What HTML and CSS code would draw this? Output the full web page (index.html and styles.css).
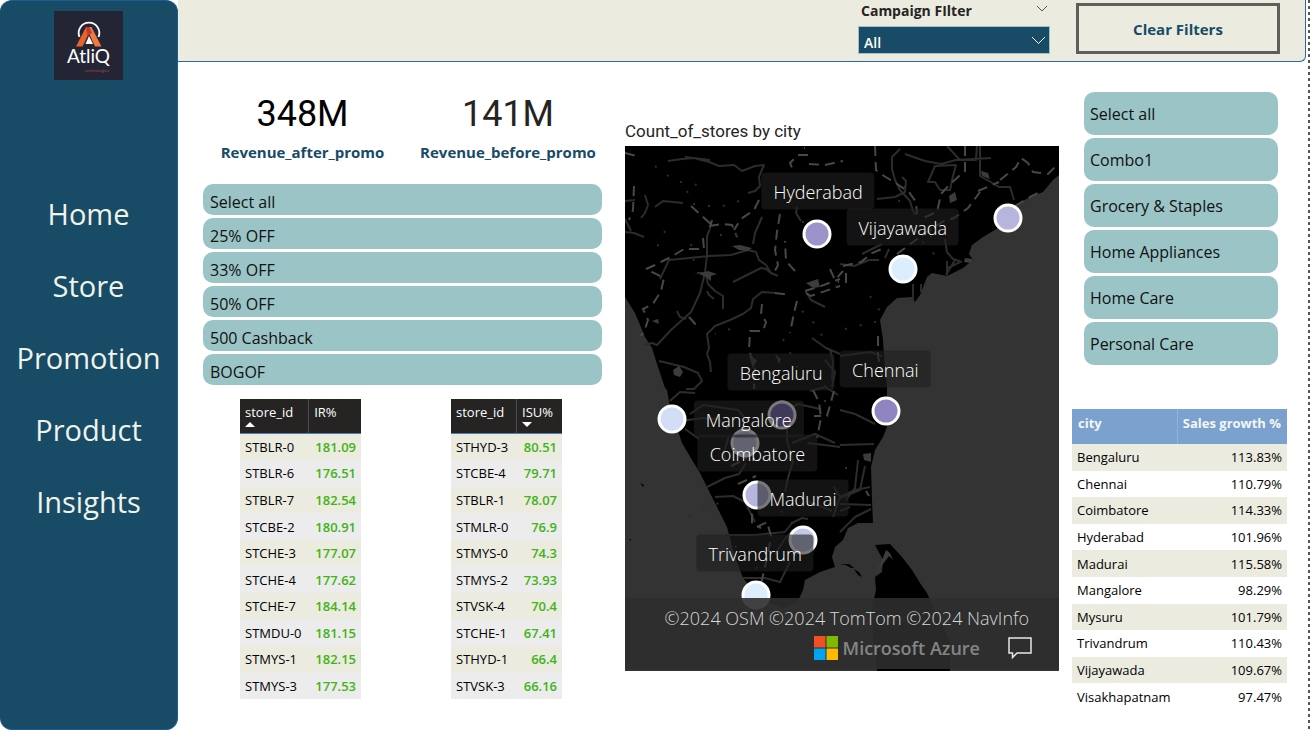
FILE: index.html
```html
<!DOCTYPE html>
<html lang="en">
<head>
<meta charset="utf-8">
<title>Promotion dashboard</title>
<link rel="stylesheet" href="styles.css">
</head>
<body>
<div class="page">
  <aside class="sidebar">
    <svg class="logo" viewBox="0 0 69 69" role="img" aria-label="AtliQ technologies">
      <rect width="69" height="69" fill="#232534"/>
      <path d="M25.500 26A10.300 10.300 0 1 1 44.500 26" fill="none" stroke="#fff" stroke-width="1.800"/>
      <path d="M22 35.500L32 16h6L28.500 35.500z" fill="#e8622c"/>
      <path d="M32 16h5.500L47.500 35.500h-6.500z" fill="#f07a3c"/>
      <path d="M32 16h3.500l2.500 6-4.500 3z" fill="#c33a35"/>
      <path d="M35 25l4 8h-7.500z" fill="#fff"/>
      <text class="logo-name" x="34.500" y="52" text-anchor="middle">AtliQ</text>
      <text class="logo-sub" x="43" y="61" text-anchor="middle">technologies</text>
    </svg>
    <nav class="nav">
      <a href="#home">Home</a>
      <a href="#store">Store</a>
      <a href="#promotion">Promotion</a>
      <a href="#product">Product</a>
      <a href="#insights">Insights</a>
    </nav>
  </aside>

  <main class="main">
    <header class="topbar">
      <div class="filter">
        <div class="filter-head">
          <label for="campaign">Campaign FIlter</label>
          <svg class="chevron" viewBox="0 0 12 7" aria-hidden="true"><path d="M1 1l5 5 5-5" fill="none" stroke="#555" stroke-width="1"/></svg>
        </div>
        <div class="select-wrap">
          <select id="campaign"><option>All</option></select>
          <svg class="select-arrow" viewBox="0 0 15 9" aria-hidden="true"><path d="M1 1l6.500 6.500L14 1" fill="none" stroke="#fff" stroke-width="1"/></svg>
        </div>
      </div>
      <button class="clear" type="button">Clear Filters</button>
    </header>

    <div class="content">
      <section class="left">
        <div class="kpis">
          <div class="kpi kpi-strong"><strong>348M</strong><span>Revenue_after_promo</span></div>
          <div class="kpi"><strong>141M</strong><span>Revenue_before_promo</span></div>
        </div>
        <div class="chips chips-low">
          <button type="button">Select all</button>
          <button type="button">25% OFF</button>
          <button type="button">33% OFF</button>
          <button type="button">50% OFF</button>
          <button type="button">500 Cashback</button>
          <button type="button">BOGOF</button>
        </div>
        <div class="tables">
          <table class="stores stores-ir">
            <thead><tr><th>store_id<i class="sort sort-up"></i></th><th>IR%</th></tr></thead>
            <tbody>
              <tr><td>STBLR-0</td><td>181.09</td></tr>
              <tr><td>STBLR-6</td><td>176.51</td></tr>
              <tr><td>STBLR-7</td><td>182.54</td></tr>
              <tr><td>STCBE-2</td><td>180.91</td></tr>
              <tr><td>STCHE-3</td><td>177.07</td></tr>
              <tr><td>STCHE-4</td><td>177.62</td></tr>
              <tr><td>STCHE-7</td><td>184.14</td></tr>
              <tr><td>STMDU-0</td><td>181.15</td></tr>
              <tr><td>STMYS-1</td><td>182.15</td></tr>
              <tr><td>STMYS-3</td><td>177.53</td></tr>
            </tbody>
          </table>
          <table class="stores stores-isu">
            <thead><tr><th>store_id</th><th>ISU%<i class="sort sort-down"></i></th></tr></thead>
            <tbody>
              <tr><td>STHYD-3</td><td>80.51</td></tr>
              <tr><td>STCBE-4</td><td>79.71</td></tr>
              <tr><td>STBLR-1</td><td>78.07</td></tr>
              <tr><td>STMLR-0</td><td>76.9</td></tr>
              <tr><td>STMYS-0</td><td>74.3</td></tr>
              <tr><td>STMYS-2</td><td>73.93</td></tr>
              <tr><td>STVSK-4</td><td>70.4</td></tr>
              <tr><td>STCHE-1</td><td>67.41</td></tr>
              <tr><td>STHYD-1</td><td>66.4</td></tr>
              <tr><td>STVSK-3</td><td>66.16</td></tr>
            </tbody>
          </table>
        </div>
      </section>

      <section class="map-panel">
        <h2>Count_of_stores by city</h2>
        <div class="map">
          <svg class="map-art" viewBox="0 0 434 525" aria-hidden="true">
            <path class="land" d="M0 0H434V29L428 34 418 46 405 51 388 61 375 81 358 91 347 99 344 108 348 114 338 122 322 130 307 127 302 131 295 149 290 156 287 151 272 152 262 161 255 174 258 194 260 224 262 242 262 281 258 291 250 304 246 321 247 354 248 377H233L223 382 218 394 210 401 207 411 210 421 195 426 180 434 178 444 172 457 158 462 142 456 128 444 118 432 110 411 102 381 85 347 75 327 67 314 57 297 45 261 42 244 40 242 33 221 27 202 20 191 10 167 0 151Z"/>
            <path class="land" d="M250 399L265 398 277 411 287 424 295 437 302 447 308 461 318 481 325 497 325 525H252L248 491 247 461 251 444 250 431 257 426 258 414Z"/>
            <path class="land" d="M15 337l4 2-1 2zM4 393h2v2zM215 418l9 0 5 4-3 0-5-3zM229 423l5 3 3 5-4-2z"/>
            <g class="roads">
              <path d="M43 15l14-2 12-1 15 4 10 4 15-1 8 6 13-5 9-1-5 12 1 9-5 5-7 2M60 11l25 3M0 55l10-1M20 49l3 10-3 8-4 5M30 61l8-6 20 2M0 86l9 1 10 4M0 73l6 12"/>
              <path d="M19 199l8-2 5 2 14-15 20-18 9-19 5-20 2-18 0-19 3-7M35 133l9-19 40-4 22-1 17-5 8 2 3 8 7 5 5 8 7 3M128 98l2-11 7-16M82 127l-10 0M81 128l2 10 7 7 8 5 0 13M82 145l2 4 5 4M108 136l20-10 8-4 5 1 6 5M52 165l3 6 6 2"/>
              <path d="M151 147l-14-1-9 7-2 9-8 6-13 6-15 6-8 8 2 14-2 6 3 8 1 10M34 215l25 6 14 6 4 8-8 8-8 0M187 192l14 10 14 6M205 203l3 12-1 20M181 146l5 8 14 7M172 61l-1 6 5 8"/>
              <path d="M275 3l-8 8 0 12 3 11 5 10 10 11 3 10 3 4M252 53l18-2 10-5 1-11-4-4M322 0l13 14 16 0 1-15M310 20l21-1-3 11-3 14-10 0-5-8-7 0zM355 0v30l9 5 10 6 11 0 4 13M280 8l20 7 16 3 15-4 35-2"/>
              <path d="M320 93l2 13 6 7 9 3M322 115v14M330 114l-9 15M335 116l-12 6M260 112l4-9M215 118l14 2 15-6 10 0M288 138v16M296 146v-8M237 108l20-10"/>
              <path d="M45 255l10-9 15 1M57 275l20-3 17 1 9 10M65 268l13-9 35 5 10 12M60 283l14 10M82 341l18-9 14-4 7-11M90 351l18-1 12 6 10 20M100 389l30 0 30-3 7-9 10-5 6 1M150 408l10-15 8-9M118 432l22 0 15 4 10-20M163 263l10-5 22 5M162 275l0 20 6 20-5 17-3 14M167 297l23-9 20 9M104 290l-5 16 2 10"/>
              <path d="M215 299l34-1M215 351l15-7 15-3M215 358l31 1M215 386l15-15 16-8M233 314l-3 28-9 12M240 320l-5 24-20 8M215 365l10-4M215 264l15 4 20 10M183 297l32 4M185 245l15-4 13 8M200 214l10 12-3 15M215 210l30-4 12 4M208 371l7-20-6-10M182 355l25 10"/>
            </g>
            <g class="borders">
              <path d="M179 2h1M183 9h-10l-8 8 3 7M184 18l16 1 18-4M0 7l15 4M9 40l-1 24-4 10M134 54l-5 10-13 9-7 11M78 92l1 11-20 0-13 8-16 8-9 4 18 9-3 13-8 13-10 5 5 11-3 9-4 7M155 68l-3 18-2 18 3 15-5 10M170 125l-9-10-1-20"/>
              <path d="M150 147l15 2M180 145l16-5 19-7M181 147l5 3 20-7 9-3M137 158l-1 10 5 8-3 9-13 0-1 20 6 14-1 24M172 155l-3 12-4 20M84 80l13-2 10 1 5 12M85 82l2-8M66 60l22 20M64 171l8 9"/>
              <path d="M250 0l1 24 8 6 10 6 15 10 7 10 1 12M340 0v25l-15 13-9 10-4 18-14 6M375 34l16-13 5-9 7 5 5 9 15 2 10-10M272 108l16-12 11-8 18-12 12-4 14-10 12-16M353 45l21-9M390 60l15-9 8-4M218 120l18-4 11-9 10-4M205 123l5 11 8-9M221 127v9h-8"/>
              <path d="M188 244l6 12 2 16-4 20M209 245l-7 25-13 0M106 320l15-7 0-20M113 338l18-8M136 354l-9 14 0 10 9 4M132 381l10-5 4 14-3 18-7 30M253 190v20l4 20M244 350l-3-5"/>
            </g>
            <g class="towns">
              <path d="M74 128l9-3 9 3-6 2 0 5-5-4zM48 224l6-4 4 6-3 5-6-2zM181 137l12-4 2 8-7 1zM340 112l8 1-2 4-7-1zM356 25l7 2 2 6-8-3zM324 50l6-4 2 8-7 3zM238 308l8-1 0 9-7-2zM252 426l9-22 4 3 3 7-4-4zM27 175l6-2 1 5zM107 100l8-1 12 3-4 3-9-1zM124 210l8 4-4 8zM150 208l6 5-2 5z"/>
              <path class="dots" d="M30 20l20 15 28 5M62 45l5 13 28 3 19-6M66 98l5 30M95 89l20 0M178 75l0 28M185 90l10 10M177 165l15 15 10 20M158 193l18 35M105 183l-15 5M220 183l38-9M245 150l10 15M287 85l24 25M305 90l12 9M200 239l0 20M180 395l-20 30M110 400l25 25M235 90l30 2M280 40l-10 25M220 322l15 0M156 365l14 15M64 370l30-13M140 345l9 15M40 85l-10 20"/>
            </g>
            <g class="pins">
              <circle cx="192" cy="88" r="13" fill="#9b93ca"/>
              <circle cx="278" cy="123" r="13" fill="#dceefe"/>
              <circle cx="383" cy="72" r="13" fill="#b6b5dd"/>
              <circle cx="261" cy="265" r="13" fill="#9084c1"/>
              <circle cx="47" cy="273" r="13" fill="#d2def5"/>
              <circle cx="157" cy="269" r="13" fill="#745fae"/>
              <circle cx="120" cy="297" r="13" fill="#c4c8e8"/>
              <circle cx="132" cy="349" r="13" fill="#b6b6df"/>
              <circle cx="178" cy="394" r="13" fill="#c4c9e9"/>
              <circle cx="131" cy="449" r="13" fill="#dceefe"/>
            </g>
          </svg>
          <span class="place hyderabad">Hyderabad</span>
          <span class="place vijayawada">Vijayawada</span>
          <span class="place chennai">Chennai</span>
          <span class="place bengaluru">Bengaluru</span>
          <span class="place mangalore">Mangalore</span>
          <span class="place coimbatore">Coimbatore</span>
          <span class="place madurai">Madurai</span>
          <span class="place trivandrum">Trivandrum</span>
          <div class="credits">
            <div class="credits-text">©2024 OSM ©2024 TomTom ©2024 NavInfo</div>
            <div class="credits-brand">
              <svg class="ms" viewBox="0 0 24 24" aria-hidden="true"><path fill="#f25022" d="M0 0h11.500v11.500H0z"/><path fill="#7fba00" d="M12.500 0H24v11.500H12.500z"/><path fill="#00a4ef" d="M0 12.500h11.500V24H0z"/><path fill="#ffb900" d="M12.500 12.500H24V24H12.500z"/></svg>
              <span>Microsoft Azure</span>
              <button class="feedback" type="button" aria-label="Feedback"><svg viewBox="0 0 24 22" aria-hidden="true"><path d="M1 1h22v15H9l-4.500 4.500V16H1z" fill="none" stroke="#e6e6e6" stroke-width="1.500"/></svg></button>
            </div>
          </div>
        </div>
      </section>

      <section class="right">
        <div class="chips chips-tall">
          <button type="button">Select all</button>
          <button type="button">Combo1</button>
          <button type="button">Grocery &amp; Staples</button>
          <button type="button">Home Appliances</button>
          <button type="button">Home Care</button>
          <button type="button">Personal Care</button>
        </div>
        <table class="growth">
          <thead><tr><th>city</th><th>Sales growth %</th></tr></thead>
          <tbody>
            <tr><td>Bengaluru</td><td>113.83%</td></tr>
            <tr><td>Chennai</td><td>110.79%</td></tr>
            <tr><td>Coimbatore</td><td>114.33%</td></tr>
            <tr><td>Hyderabad</td><td>101.96%</td></tr>
            <tr><td>Madurai</td><td>115.58%</td></tr>
            <tr><td>Mangalore</td><td>98.29%</td></tr>
            <tr><td>Mysuru</td><td>101.79%</td></tr>
            <tr><td>Trivandrum</td><td>110.43%</td></tr>
            <tr><td>Vijayawada</td><td>109.67%</td></tr>
            <tr><td>Visakhapatnam</td><td>97.47%</td></tr>
          </tbody>
        </table>
      </section>
    </div>
  </main>
  <div class="edge"></div>
</div>
</body>
</html>
```

FILE: styles.css
```css
* { box-sizing: border-box; }

body {
  margin: 0;
  background: #fff;
  color: #252423;
  font-family: "Open Sans", "Noto Sans", sans-serif;
  font-size: 15px;
}

button, select { font: inherit; color: inherit; }

.page { display: flex; min-height: 100vh; }

.sidebar {
  flex: 0 0 178px;
  display: flex;
  flex-direction: column;
  align-items: center;
  padding-top: 10px;
  background: #174b66;
  border: 1px solid #1c5c94;
  border-left: 0;
  border-radius: 12px;
}

.logo { width: 69px; height: 69px; }
.logo-name { font-family: Lato, sans-serif; font-size: 19px; fill: #fff; }
.logo-sub { font-size: 4px; fill: #c0455a; }

.nav {
  display: flex;
  flex-direction: column;
  align-items: center;
  margin-top: 98px;
}
.nav a {
  color: #f0f3ea;
  font-size: 29px;
  line-height: 72px;
  text-decoration: none;
}

.main { flex: 1; min-width: 0; }

.edge {
  flex: 0 0 2px;
  margin-left: 2px;
  background: repeating-linear-gradient(#555 0 3px, #fff 3px 6px);
}

.topbar {
  display: flex;
  justify-content: flex-end;
  gap: 26px;
  height: 62px;
  padding: 0 25px 7px 0;
  background: #ebebe0;
  border: 1px solid #2d6a9c;
  border-width: 0 1px 1px 0;
  border-bottom-right-radius: 6px;
}
.filter {
  width: 192px;
  display: flex;
  flex-direction: column;
  justify-content: space-between;
}
.filter-head {
  display: flex;
  justify-content: space-between;
  align-items: center;
  padding: 0 2px 0 3px;
  font-size: 14px;
  font-weight: 700;
  line-height: 21px;
}
.chevron { width: 12px; height: 7px; margin-bottom: 5px; }
.select-wrap { position: relative; }
.select-wrap select {
  display: block;
  width: 100%;
  height: 28px;
  padding: 4px 5px 0;
  appearance: none;
  background: #174b66;
  border: 1px solid #9cc0cc;
  border-radius: 0;
  color: #fff;
  font-size: 14px;
  font-weight: 600;
}
.select-arrow {
  position: absolute;
  right: 4px;
  top: 10px;
  width: 15px;
  height: 9px;
  pointer-events: none;
}
.clear {
  width: 204px;
  margin-top: 3px;
  padding-top: 2px;
  background: transparent;
  border: 3px solid #605e5c;
  color: #174b66;
  font-size: 15px;
  font-weight: 700;
}

.content {
  display: grid;
  grid-template-columns: 409fr 434fr 215fr;
  column-gap: 13px;
  padding: 30px 19px 0 25px;
  align-items: start;
}
.left { margin-right: 10px; }

.kpis {
  display: grid;
  grid-template-columns: 199fr 188fr;
  column-gap: 12px;
  height: 92px;
}
.kpi { display: flex; flex-direction: column; align-items: center; }
.kpi strong {
  font-family: Roboto, sans-serif;
  font-size: 36px;
  font-weight: 400;
  line-height: 45px;
}
.kpi-strong strong { color: #000; }
.kpi span { color: #174b66; font-weight: 700; line-height: 30px; }

.chips { display: flex; flex-direction: column; gap: 3px; }
.chips button {
  height: 43px;
  padding: 1px 6px 0;
  background: #9bc4c6;
  border: 0;
  border-radius: 10px;
  color: #111;
  text-align: left;
  font-size: 16px;
}
.chips-low button { height: 31px; padding: 4px 7px 0; }
.chips-tall { padding: 0 9px 0 12px; }

table { border-collapse: collapse; font-size: 13px; white-space: nowrap; }
th { font-weight: 400; text-align: left; vertical-align: top; }
td { padding: 0 5px; color: #000; }
td:last-child { text-align: right; }

.tables { display: flex; gap: 90px; padding: 14px 40px 0 37px; }
.stores { height: 300px; line-height: 20px; }
.stores-ir { flex: 121; }
.stores-isu { flex: 111; }
.stores th {
  height: 34px;
  padding: 3px 5px 0;
  background: #252423;
  border-bottom: 1px solid #4a7fb5;
  color: #fff;
}
.stores th + th { border-left: 1px solid #4c4b4a; }
.stores td:last-child { color: #41b416; font-weight: 600; }
.stores tr:nth-child(odd) td, .growth tr:nth-child(odd) td { background: #ebebe0; }
.stores tr:nth-child(even) td { background: #ececec; }
.sort {
  display: block;
  width: 0;
  border: 5px solid transparent;
  border-width: 0 5px;
}
.sort-up { border-bottom: 5px solid #fff; }
.sort-down { border-top: 5px solid #fff; }

.map-panel h2 {
  margin: 29px 0 4px;
  font-family: Roboto, sans-serif;
  font-size: 17px;
  font-weight: 400;
  line-height: 21px;
}
.map {
  position: relative;
  aspect-ratio: 434 / 525;
  background: #333;
  overflow: hidden;
}
.map-art { display: block; width: 100%; height: 100%; }
.land { fill: #000; }
.roads path { fill: none; stroke: #2c2c2c; stroke-width: 2; stroke-linejoin: round; }
.borders path { fill: none; stroke: #484848; stroke-width: 2; stroke-dasharray: 10 6; }
.towns path { fill: #3c3c3c; }
.towns .dots { fill: none; stroke: #2e2e2e; stroke-width: 2; stroke-dasharray: 2 13; }
.pins circle { stroke: #fff; stroke-width: 3; }

.place {
  position: absolute;
  padding: 1px 12px 0;
  border-radius: 4px;
  background: rgba(32, 32, 32, 0.6);
  color: #fff;
  font-size: 18px;
  font-weight: 300;
  line-height: 36px;
  transform: translate(-50%, -50%);
}
.hyderabad { left: 44.500%; top: 8.500%; }
.vijayawada { left: 64%; top: 15.500%; }
.chennai { left: 60%; top: 42.500%; }
.bengaluru { left: 36%; top: 43%; }
.mangalore { left: 28.500%; top: 52%; }
.coimbatore { left: 30.500%; top: 58.500%; }
.madurai { left: 41%; top: 67%; }
.trivandrum { left: 30%; top: 77.500%; }

.credits {
  position: absolute;
  inset: auto 0 2px;
  height: 71px;
  padding: 5px 27px 0;
  background: rgba(46, 46, 46, 0.9);
}
.credits-text {
  padding-right: 3px;
  color: #d8d8d8;
  font-size: 18px;
  font-weight: 300;
  line-height: 31px;
  text-align: right;
  white-space: nowrap;
}
.credits-brand {
  display: flex;
  align-items: center;
  justify-content: flex-end;
  gap: 5px;
  color: #858585;
  font-size: 18px;
  font-weight: 600;
  line-height: 28px;
}
.ms { width: 24px; height: 24px; }
.feedback { margin-left: 23px; padding: 0; border: 0; background: none; }
.feedback svg { display: block; width: 24px; height: 22px; }

.growth { width: 100%; height: 301px; margin-top: 44px; line-height: 20px; }
.growth th {
  height: 35px;
  padding: 4px 6px 0;
  background: #7ba2ce;
  color: #f4f6f4;
  font-weight: 700;
}
.growth th + th { border-left: 1px solid #8fb4dc; text-align: right; padding-left: 2px; }
```
